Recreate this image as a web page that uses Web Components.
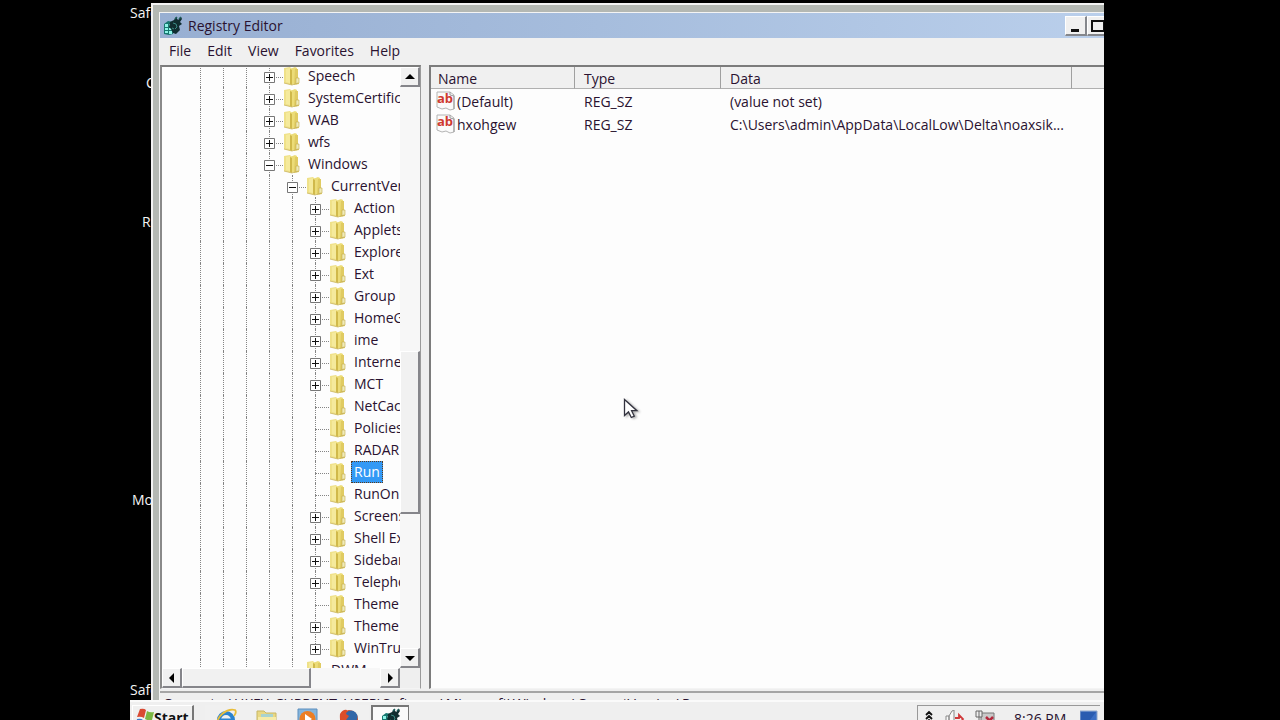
<!DOCTYPE html>
<html lang="en">
<head>
<meta charset="utf-8">
<title>Registry Editor</title>
<style>
  html, body { margin: 0; height: 100%; background: #000; overflow: hidden; }
  body { font: 14px/22px "Open Sans", "Noto Sans", sans-serif; color: #2a1230; }
</style>
</head>
<body>
<desktop-screen>
  <desktop-label style="--y:2px">Safe</desktop-label>
  <desktop-label style="--y:72px;--x:16px">C</desktop-label>
  <desktop-label style="--y:211px;--x:12px">R</desktop-label>
  <desktop-label style="--y:489px;--x:2px">Mo</desktop-label>
  <desktop-label style="--y:679px">Safe</desktop-label>
  <app-window>
    <title-bar slot="title">Registry Editor</title-bar>
    <menu-bar slot="menu"></menu-bar>
    <registry-tree slot="tree"></registry-tree>
    <value-list slot="values"></value-list>
    <span slot="status">Computer\HKEY_CURRENT_USER\Software\Microsoft\Windows\CurrentVersion\Run</span>
  </app-window>
  <task-bar slot="taskbar"></task-bar>
  <mouse-pointer></mouse-pointer>
</desktop-screen>

<script>
const define = (name, html, setup) => {
  const template = document.createElement('template');
  template.innerHTML = html;
  customElements.define(name, class extends HTMLElement {
    constructor() {
      super();
      this.attachShadow({ mode: 'open' }).append(template.content.cloneNode(true));
    }
    connectedCallback() {
      if (setup && !this.ready) { this.ready = true; setup(this, this.shadowRoot); }
    }
  });
};

define('desktop-screen', `
  <style>
    :host { display: flex; flex-direction: column; justify-content: flex-end; position: relative;
      height: 100vh; margin: 0 176px 0 130px; overflow: hidden; background: #000; }
  </style>
  <slot></slot><slot name="taskbar"></slot>`);

define('desktop-label', `
  <style>
    :host { display: block; position: absolute; left: var(--x, 0px); top: var(--y); color: #f4f4f4; white-space: nowrap; }
  </style><slot></slot>`);

define('mouse-pointer', `
  <style>
    :host { display: block; position: absolute; left: 493px; top: 397px; width: 20px; height: 24px; }
    svg { display: block; filter: drop-shadow(2px 1px 1px rgba(0,0,0,.3)); }
  </style>
  <svg width="20" height="24" viewBox="0 0 20 24" aria-hidden="true">
    <path d="M1.5 2.5v16l4-3.6 2.8 5.6 3-1.4-2.7-5.4h5.3z" fill="#fff" stroke="#33333f" stroke-width="1.3"/>
  </svg>`);

define('app-window', `
  <style>
    :host { display: flex; flex-direction: column; box-sizing: border-box; position: absolute;
      left: 21px; right: -39px; top: 3px; bottom: 20px; background: #efefef; overflow: hidden;
      border: 2px solid #f2f2f2; border-right-width: 8px; border-bottom: 0; }
    .frame { flex: 1; display: flex; flex-direction: column; min-height: 0;
      border: solid #b4b8b3; border-width: 7px 0 0 6px; }
    .inner { flex: 1; display: flex; flex-direction: column; min-height: 0; border: solid #f4f4f4; border-width: 1px 0 0 1px; }
    .panes { flex: 1; display: grid; grid-template-columns: 261px 1fr; column-gap: 8px; min-height: 0; }
    footer { box-sizing: border-box; height: 9px; margin-top: 2px; padding: 0 4px 0 3px; line-height: 22px;
      border-top: 2px solid #a5a5a5; overflow: hidden; white-space: nowrap; }
  </style>
  <div class="frame"><div class="inner">
    <slot name="title"></slot>
    <slot name="menu"></slot>
    <div class="panes"><slot name="tree"></slot><slot name="values"></slot></div>
    <footer><slot name="status"></slot></footer>
  </div></div>`);

define('regedit-icon', `
  <style>:host { display: block; width: 20px; height: 20px; } svg { display: block; }</style>
  <svg width="20" height="20" viewBox="0 0 20 20" aria-hidden="true">
    <path d="M1 8l4-3 5 1v12l-4 1-5-1z" fill="#16776f"/>
    <path d="M2 8h3v3H2zM2 12h3v2H2zM6 8h3v3H6zM6 12h3v2H6zM2 15h3v2H2zM6 15h3v3H6zM10 14h3v3h-3z" fill="#8df3e6"/>
    <path d="M7 6l4-2 2-3 2 3 3-3 1 2-2 3 2 2-3 2 1 4-4 4-3-1-2-4-2-2z" fill="#102d2f"/>
    <path d="M10 7l3 1 1 3-2 2M9 12l2 1" fill="none" stroke="#3b8983"/>
    <path d="M12 3l2-2M16 3l2-2" stroke="#1c5d5a" stroke-width="1.5"/>
  </svg>`);

define('title-bar', `
  <style>
    :host { display: flex; align-items: center; box-sizing: border-box; height: 25px; padding: 0 2px 0 3px;
      background: linear-gradient(90deg, #98afd2, #a6bddd 45%, #bbd0ec); }
    span { flex: 1; margin-left: 5px; padding-top: 1px; }
    button { box-sizing: border-box; width: 22px; height: 20px; padding: 0; margin: 0; background: #f0f0f0;
      border: solid; border-width: 1px 2px 2px 1px; border-color: #fff #85878c #85878c #fff; }
    button:last-child { margin-left: 2px; }
    svg { display: block; margin: auto; }
  </style>
  <regedit-icon></regedit-icon><span><slot></slot></span>
  <button aria-label="Minimize"><svg width="16" height="15"><path d="M3 12.5h8" stroke="#111" stroke-width="3"/></svg></button>
  <button aria-label="Maximize"><svg width="16" height="15"><path d="M2 3h12v10H2z" fill="none" stroke="#111" stroke-width="2"/></svg></button>
  <button aria-label="Close"><svg width="16" height="15"><path d="M3 3l9 9m0-9l-9 9" stroke="#111" stroke-width="2"/></svg></button>`);

define('menu-bar', `
  <style>
    :host { display: flex; align-items: center; box-sizing: border-box; height: 27px; padding: 0 0 2px 1px; background: #f0f0f0; }
    button { font: inherit; color: inherit; background: none; border: 0; padding: 0 8px; }
  </style>
  <button>File</button><button>Edit</button><button>View</button><button>Favorites</button><button>Help</button>`);

define('scroll-bar', `
  <style>
    :host { display: flex; background: #f7f7f7; min-width: 0; min-height: 0; }
    :host([vertical]) { flex-direction: column; }
    button, .thumb { box-sizing: border-box; padding: 0; background: #f1f1f1; border: solid; border-width: 1px 2px 2px 1px;
      border-color: #fff #85858a #85858a #fff; }
    button { flex: none; width: 20px; height: 20px; display: grid; place-items: center; }
    .before { flex: var(--before) 0 0; } .thumb { flex: var(--size) 0 0; } .after { flex: var(--after) 0 0; }
    button:last-child svg { transform: rotate(180deg); }
  </style>
  <button aria-label="Back"><svg width="10" height="10"><path fill="#000"/></svg></button>
  <div class="before"></div><div class="thumb"></div><div class="after"></div>
  <button aria-label="Forward"><svg width="10" height="10"><path fill="#000"/></svg></button>`,
  (host, root) => {
    const d = host.hasAttribute('vertical') ? 'M5 2l5 5H0z' : 'M2 5l5-5v10z';
    root.querySelectorAll('path').forEach(p => p.setAttribute('d', d));
  });

define('tree-row', `
  <style>
    :host { display: flex; align-items: center; height: 22px; white-space: nowrap; }
    .cell { flex: none; position: relative; width: 23px; height: 22px; }
    .cell::before { content: ""; position: absolute; left: 11px; top: 0; height: 100%; border-left: 1px dotted #858585; }
    .last::before { height: 11px; }
    .stub::after { content: ""; position: absolute; left: 11px; right: -2px; top: 12px; border-top: 1px dotted #858585; }
    .box { position: absolute; z-index: 1; left: 6px; top: 7px; }
    .folder { flex: none; margin: 0 5px 0 2px; }
    span { padding: 0 2px; line-height: 20px; border: 1px solid transparent; }
    :host([selected]) span { background: #3399f5; color: #fff; border: 1px dotted #5b3a1c; }
  </style>
  <svg class="folder" width="17" height="20" viewBox="0 0 17 20" aria-hidden="true">
    <path d="M1 2l6-1 2 2v16l-8-2z" fill="#efe189"/>
    <path d="M7 3l5-2 2 1v14l-5 3z" fill="#ecdc78"/>
    <path d="M12 3h3v9h1v6l-5 1z" fill="#e0cb62"/>
    <path d="M3 3l4-1v15l-4-1z" fill="#f5ea9c"/>
    <path d="M7 3l2 1v15l-2-1z" fill="#d0b94a"/>
    <path d="M13 12h3v5l-3 1z" fill="#f0ebb8" stroke="#c2ac4e" stroke-width=".6"/>
    <path d="M1 17l8 2 6-2" fill="none" stroke="#c9b45c" stroke-width=".8"/>
  </svg>
  <span><slot></slot></span>`,
  (host, root) => {
    const level = +host.getAttribute('level');
    const folder = root.querySelector('.folder');
    for (let i = 0; i <= level; i++) {
      const cell = document.createElement('div');
      cell.className = 'cell';
      if (i === level) {
        cell.classList.add('stub');
        if (host.hasAttribute('last')) cell.classList.add('last');
        const state = host.getAttribute('state');
        if (state) cell.innerHTML = `<svg class="box" width="11" height="11"><path d="M.5 .5h10v10H.5z" fill="#fff" stroke="#777"/><path d="M2 5.5h7${state === 'closed' ? 'M5.5 2v7' : ''}" stroke="#111" stroke-width="1"/></svg>`;
      }
      folder.before(cell);
    }
  });

define('registry-tree', `
  <style>
    :host { display: grid; grid-template: minmax(0, 1fr) 20px / minmax(0, 1fr) 20px; box-sizing: border-box; min-height: 0;
      border: solid; border-width: 2px 1px 1px 2px; border-color: #7c7c7c #9a9a9a #f4f4f4 #8a8a8a; background: #fdfdfd; }
    .rows { overflow: hidden; padding-left: 27px; }
    .rows tree-row:first-child { margin-top: -2px; }
    .corner { background: #efefef; }
    scroll-bar[vertical] { --before: 265; --size: 161; --after: 135; }
    .across { --before: 0; --size: 127; --after: 70; }
  </style>
  <div class="rows" role="tree"></div>
  <scroll-bar vertical></scroll-bar>
  <scroll-bar class="across"></scroll-bar>
  <div class="corner"></div>`,
  (host, root) => {
    const rows = [
      [3, 'Speech', 'closed'], [3, 'SystemCertific', 'closed'], [3, 'WAB', 'closed'], [3, 'wfs', 'closed'],
      [3, 'Windows', 'open'], [4, 'CurrentVer', 'open'],
      [5, 'Action', 'closed'], [5, 'Applets', 'closed'], [5, 'Explorer', 'closed'], [5, 'Ext', 'closed'],
      [5, 'Group P', 'closed'], [5, 'HomeG', 'closed'], [5, 'ime', 'closed'], [5, 'Internet', 'closed'],
      [5, 'MCT', 'closed'], [5, 'NetCac', ''], [5, 'Policies', ''], [5, 'RADAR', ''], [5, 'Run', ''],
      [5, 'RunOn', ''], [5, 'Screens', 'closed'], [5, 'Shell Ex', 'closed'], [5, 'Sidebar', 'closed'],
      [5, 'Telepho', 'closed'], [5, 'Theme', ''], [5, 'Theme', 'closed'], [5, 'WinTru', 'closed'], [4, 'DWM', ''],
    ];
    const list = root.querySelector('.rows');
    rows.forEach(([level, name, state]) => {
      const row = document.createElement('tree-row');
      row.setAttribute('role', 'treeitem');
      row.setAttribute('level', level);
      if (state) row.setAttribute('state', state);
      if (name === 'Run') row.setAttribute('selected', '');
      if (name === 'WinTru') row.setAttribute('last', '');
      row.textContent = name;
      list.append(row);
    });
  });

define('string-icon', `
  <style>:host { display: inline-block; vertical-align: top; width: 19px; height: 20px; margin: 0 2px 0 0; } svg { display: block; }
    text { font: bold 13px "Open Sans", sans-serif; fill: #cf3a30; }</style>
  <svg width="19" height="20" viewBox="0 0 19 20" aria-hidden="true">
    <path d="M1 1h13l4 3v14l-4 1-4-2-4 1-5-2z" fill="#fbfbfb" stroke="#b4b4b4"/>
    <path d="M14 1v3l4 1v13" fill="none" stroke="#999"/>
    <text x="1" y="12">ab</text>
  </svg>`);

define('value-list', `
  <style>
    :host { display: block; box-sizing: border-box; min-width: 0; overflow: hidden; background: #fdfdfd;
      border: solid; border-width: 2px 0 1px 2px; border-color: #7c7c7c #999 #f4f4f4 #7c7c7c; }
    table { width: 100%; table-layout: fixed; border-collapse: separate; border-spacing: 0; }
    .name { width: 144px; } .type { width: 146px; } .data { width: 351px; }
    th { box-sizing: border-box; height: 22px; padding: 2px 0 0 9px; text-align: left; font-weight: normal;
      background: #f0f0f0; border-right: 1px solid #a0a0a0; border-bottom: 1px solid #b0b0b0; line-height: 19px; }
    th:first-child { padding-left: 7px; }
    td { box-sizing: border-box; height: 23px; line-height: 21px; padding: 2px 0 0 9px; white-space: nowrap; overflow: hidden; }
    td:first-child { padding-left: 5px; }
  </style>
  <table>
    <colgroup><col class="name"><col class="type"><col class="data"><col></colgroup>
    <thead><tr><th>Name</th><th>Type</th><th>Data</th><th></th></tr></thead>
    <tbody>
      <tr><td><string-icon></string-icon>(Default)</td><td>REG_SZ</td><td>(value not set)</td><td></td></tr>
      <tr><td><string-icon></string-icon>hxohgew</td><td>REG_SZ</td><td>C:\\Users\\admin\\AppData\\LocalLow\\Delta\\noaxsik...</td><td></td></tr>
    </tbody>
  </table>`);

define('task-bar', `
  <style>
    :host { display: flex; position: relative; flex: none; box-sizing: border-box; height: 20px; overflow: hidden;
      background: #efefef; border-top: 2px solid #fafafa; }
    button { flex: none; box-sizing: border-box; height: 32px; margin: 3px 0 0; padding: 0; font: inherit; color: inherit;
      display: flex; align-items: flex-start; justify-content: center; background: #f0f0f0; border: 0; }
    .start { width: 62px; margin-left: 2px; padding: 2px 0 0 3px; justify-content: flex-start;
      font-weight: bold; border: solid; border-width: 1px 2px 2px 1px; border-color: #fff #777 #777 #fff; }
    .start span { line-height: 20px; color: #111; }
    .quick { width: 41px; padding-top: 3px; }
    .pressed { width: 38px; margin-left: 2px; padding-top: 1px; background: #fafafa; border: 1px solid #777; border-width: 2px 1px 1px 2px; }
    .launch { display: flex; flex: 1; padding-left: 11px; }
    .tray { display: flex; flex: none; box-sizing: border-box; width: 183px; height: 32px; margin: 3px 4px 0 0; padding: 4px 0 0 5px;
      border: solid #999; border-width: 1px 0 0 1px; }
    .tray svg { flex: none; margin-right: 10px; }
    .tray time { flex: 1; line-height: 18px; margin-left: 9px; white-space: nowrap; }
    .tray svg:last-child { margin-right: 2px; }
  </style>
  <button class="start"><svg width="18" height="20" viewBox="0 0 18 20" aria-hidden="true">
    <path d="M4 1q4-1 6 1l-2 8q-3-2-7-1z" fill="#d94a32"/><path d="M11 3q3 2 7 1l-2 8q-4 1-7-1z" fill="#7bb743"/>
    <path d="M1 11q4-1 6 1l-2 7q-2-2-5-1z" fill="#3a79cf"/><path d="M8 13q4 2 7 1l-2 6H6z" fill="#efc03c"/></svg><span>Start</span></button>
  <div class="launch">
    <button class="quick" aria-label="Internet Explorer"><svg width="22" height="22" viewBox="0 0 22 22">
      <circle cx="11" cy="12" r="7" fill="none" stroke="#2b83cf" stroke-width="4"/><path d="M6 12h12" stroke="#2b83cf" stroke-width="3"/>
      <path d="M2 18C1 8 12 0 20 2q2 2-1 6" fill="none" stroke="#e8bd3a" stroke-width="1.8"/></svg></button>
    <button class="quick" aria-label="Libraries"><svg width="22" height="22" viewBox="0 0 22 22">
      <path d="M1 3h7l2 2h10v15H1z" fill="#e9d884" stroke="#c7b664"/><path d="M5 6h12v4H5z" fill="#a9d3cf"/><path d="M2 9h18v11H2z" fill="#f6eba8"/></svg></button>
    <button class="quick" aria-label="Media Player"><svg width="22" height="22" viewBox="0 0 22 22">
      <path d="M1 1h19v20H1z" fill="#85b5dc" stroke="#5c8fbe"/><circle cx="10.500" cy="11" r="8" fill="#ec7e23"/><path d="M8 6l7 5-7 5z" fill="#fff"/></svg></button>
    <button class="quick" aria-label="Firefox"><svg width="20" height="22" viewBox="0 0 20 22">
      <circle cx="10" cy="11" r="9" fill="#d85127"/><circle cx="12" cy="9" r="6.500" fill="#3267a8"/><path d="M1 6q3-5 7-4l-1 4 3 2-3 4 5 4-5 4Q0 17 1 6z" fill="#dc4d2a"/></svg></button>
    <button class="pressed" aria-label="Registry Editor"><regedit-icon></regedit-icon></button>
  </div>
  <div class="tray">
    <svg width="12" height="16" viewBox="0 0 12 16"><path d="M3 5l3-3 3 3M3 9l3-3 3 3M3 13l3-3 3 3" fill="none" stroke="#111" stroke-width="1.8"/></svg>
    <svg width="20" height="18" viewBox="0 0 20 18"><path d="M1 6h3v10H1zM4 6l3-5 2-1v16H4z" fill="#f8f8f8" stroke="#888"/><path d="M10 8h4V5l4 4-4 5M10 12h6" fill="none" stroke="#d0393b" stroke-width="1.8"/></svg>
    <svg width="20" height="18" viewBox="0 0 20 18"><path d="M6 3h13v11H6z" fill="#c9c9c9" stroke="#777"/><path d="M1 1h6v6H1zM4 1v15" fill="#eee" stroke="#666"/><path d="M11 7l7 7m0-7l-7 7" stroke="#b5283d" stroke-width="2.500"/></svg>
    <time>8:26 PM</time>
    <svg width="18" height="18" viewBox="0 0 18 18"><path d="M0 1h17v14H0z" fill="#3b6fc4" stroke="#8fa6c8"/><path d="M1 2h15l-9 12H1z" fill="#2a5cb0"/></svg>
  </div>`);
</script>
</body>
</html>
